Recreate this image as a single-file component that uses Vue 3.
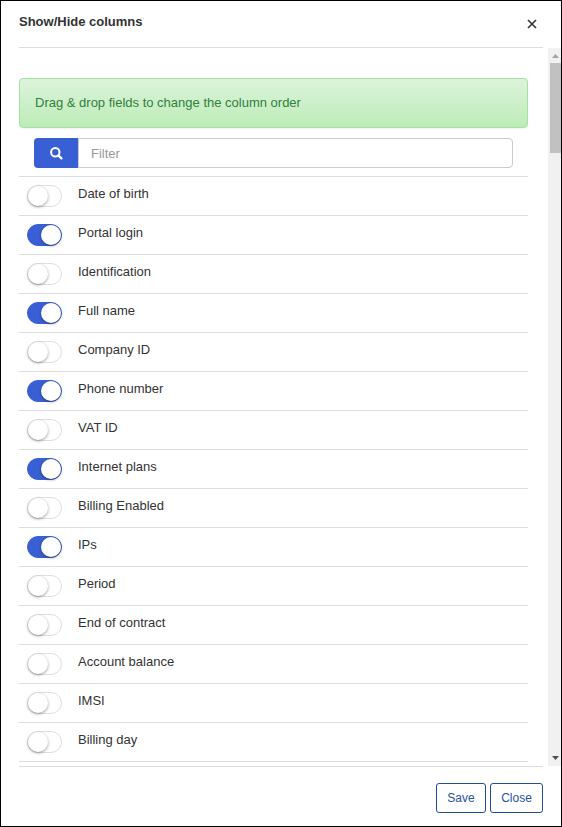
<script setup>
import { ref, computed } from 'vue'

const filter = ref('')
const columns = ref([
  { name: 'Date of birth', on: false },
  { name: 'Portal login', on: true },
  { name: 'Identification', on: false },
  { name: 'Full name', on: true },
  { name: 'Company ID', on: false },
  { name: 'Phone number', on: true },
  { name: 'VAT ID', on: false },
  { name: 'Internet plans', on: true },
  { name: 'Billing Enabled', on: false },
  { name: 'IPs', on: true },
  { name: 'Period', on: false },
  { name: 'End of contract', on: false },
  { name: 'Account balance', on: false },
  { name: 'IMSI', on: false },
  { name: 'Billing day', on: false },
])
const visible = computed(() =>
  columns.value.filter((c) => c.name.toLowerCase().includes(filter.value.toLowerCase()))
)
</script>

<template>
  <div class="dialog">
    <header class="header">
      <h1 class="title">Show/Hide columns</h1>
      <button class="dismiss" aria-label="Close">
        <svg width="10" height="10" viewBox="0 0 10 10">
          <path d="M1 1 L9 9 M9 1 L1 9" fill="none" stroke="#333" stroke-width="1.6" />
        </svg>
      </button>
    </header>

    <div class="body">
      <main class="content">
        <div class="alert">Drag &amp; drop fields to change the column order</div>
        <div class="search">
          <span class="search-icon">
            <svg width="13" height="13" viewBox="0 0 13 13">
              <circle cx="5.3" cy="5.3" r="4.2" fill="none" stroke="#fff" stroke-width="2" />
              <path d="M8.5 8.5 L11.4 11.4" stroke="#fff" stroke-width="2.3" stroke-linecap="round" />
            </svg>
          </span>
          <input v-model="filter" class="search-input" type="text" placeholder="Filter" />
        </div>
        <ul class="list">
          <li v-for="c in visible" :key="c.name" class="row">
            <button class="toggle" :class="{ on: c.on }" :aria-label="c.name" @click="c.on = !c.on">
              <span class="knob"></span>
            </button>
            <span class="label">{{ c.name }}</span>
          </li>
        </ul>
      </main>
      <div class="scrollbar">
        <svg class="arrow" width="13" height="15" viewBox="0 0 13 15">
          <path d="M4 10 L7.5 6 L11 10 Z" fill="#a3a3a3" />
        </svg>
        <div class="thumb"></div>
        <svg class="arrow down" width="13" height="15" viewBox="0 0 13 15">
          <path d="M4 5 L11 5 L7.5 9 Z" fill="#505050" />
        </svg>
      </div>
    </div>

    <footer class="footer">
      <button class="btn save">Save</button>
      <button class="btn close">Close</button>
    </footer>
  </div>
</template>

<style>
body {
  margin: 0;
  overflow: hidden;
}
</style>

<style scoped>
.dialog {
  box-sizing: border-box;
  width: 562px;
  height: 827px;
  border: 1px solid #000;
  background: #fff;
  color: #333;
  font: 13px/18px "Liberation Sans", Arial, sans-serif;
  display: flex;
  flex-direction: column;
}
button {
  font-family: inherit;
  padding: 0;
  cursor: pointer;
}
.header {
  box-sizing: border-box;
  height: 47px;
  margin: 0 18px;
  border-bottom: 1px solid #ddd;
  display: flex;
  justify-content: space-between;
  align-items: flex-start;
}
.title {
  margin: 12px 0 0;
  font-size: 13px;
  line-height: 18px;
  font-weight: bold;
}
.dismiss {
  display: flex;
  margin: 18px 6px 0 0;
  border: 0;
  background: none;
}
.body {
  height: 718px;
  display: flex;
  justify-content: space-between;
}
.content {
  width: 509px;
  margin-left: 18px;
  padding-top: 30px;
}
.alert {
  box-sizing: border-box;
  height: 50px;
  padding: 15px;
  border: 1px solid #a3e2a0;
  border-radius: 4px;
  background: linear-gradient(#dcf4da, #bdebb8);
  box-shadow: 0 1px 2px rgba(0, 0, 0, 0.05);
  color: #31803d;
}
.search {
  display: flex;
  height: 30px;
  margin: 10px 15px 8px;
}
.search-icon {
  box-sizing: border-box;
  width: 44px;
  padding-left: 1px;
  display: flex;
  align-items: center;
  justify-content: center;
  background: #395fd4;
  border-radius: 4px 0 0 4px;
}
.search-icon svg {
  margin-top: 1px;
}
.search-input {
  box-sizing: border-box;
  flex: 1;
  min-width: 0;
  padding: 0 12px;
  border: 1px solid #ccc;
  border-radius: 0 4px 4px 0;
  background: #fff;
  color: #333;
  font: 13px "Liberation Sans", Arial, sans-serif;
  outline: 0;
}
.search-input::placeholder {
  color: #999;
}
.list {
  list-style: none;
  margin: 0;
  padding: 0;
  border-bottom: 1px solid #ddd;
}
.row {
  box-sizing: border-box;
  height: 39px;
  padding: 8px 8px 0;
  border-top: 1px solid #ddd;
  display: flex;
  align-items: flex-start;
  gap: 16px;
}
.toggle {
  box-sizing: border-box;
  width: 35px;
  height: 22px;
  border: 1px solid #dfdfdf;
  border-radius: 11px;
  background: #fff;
  display: flex;
}
.toggle.on {
  border-color: #395fd4;
  background: #395fd4;
  justify-content: flex-end;
}
.knob {
  width: 20px;
  height: 20px;
  border-radius: 50%;
  background: #fff;
  box-shadow: 0 1px 3px rgba(0, 0, 0, 0.4);
}
.scrollbar {
  width: 13px;
  height: 718px;
  background: #f1f1f1;
  display: flex;
  flex-direction: column;
}
.arrow {
  display: block;
}
.thumb {
  height: 90px;
  margin-left: 2px;
  background: #c1c1c1;
}
.down {
  margin-top: auto;
}
.footer {
  margin: 0 18px;
  padding-top: 16px;
  border-top: 1px solid #ddd;
  display: flex;
  justify-content: flex-end;
  gap: 4px;
}
.btn {
  box-sizing: border-box;
  height: 30px;
  border: 1px solid #234a9f;
  border-radius: 3px;
  background: #fff;
  color: #2a4fa3;
  font-size: 12px;
}
.save {
  width: 50px;
}
.close {
  width: 53px;
}
</style>
